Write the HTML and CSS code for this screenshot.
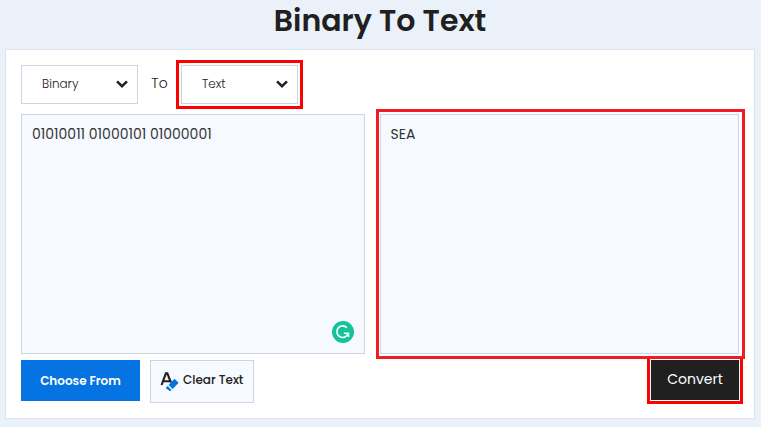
FILE: index.html
```html
<!DOCTYPE html>
<html lang="en">
<head>
<meta charset="utf-8">
<meta name="viewport" content="width=device-width, initial-scale=1">
<title>Binary To Text</title>
<link rel="stylesheet" href="styles.css">
</head>
<body>
<main class="page">
  <h1 class="title">Binary To Text</h1>
  <form class="card">
    <div class="units">
      <div class="select">
        <select aria-label="Convert from"><option>Binary</option></select>
        <svg class="chevron" viewBox="0 0 12 8" aria-hidden="true"><path d="M1 1.3 6 6.2 11 1.3"/></svg>
      </div>
      <span class="to">To</span>
      <div class="select select-marked">
        <select aria-label="Convert to"><option>Text</option></select>
        <svg class="chevron" viewBox="0 0 12 8" aria-hidden="true"><path d="M1 1.3 6 6.2 11 1.3"/></svg>
      </div>
    </div>
    <div class="panes">
      <div class="pane">
        <textarea aria-label="Input" spellcheck="false">01010011 01000101 01000001</textarea>
        <svg class="checker" viewBox="0 0 22 22" aria-hidden="true">
          <circle cx="11" cy="11" r="11" fill="#15c39a"/>
          <path d="M14.8 6.6A5.8 5.8 0 1 0 16.2 12.3H11.8M16.4 11.5V16" fill="none" stroke="#fff" stroke-width="1.6"/>
        </svg>
      </div>
      <div class="pane pane-marked">
        <textarea aria-label="Output" spellcheck="false" readonly>SEA</textarea>
      </div>
    </div>
    <div class="actions">
      <button class="choose" type="button">Choose From</button>
      <button class="clear" type="button">
        <svg class="eraser" viewBox="0 0 20 22" aria-hidden="true">
          <path d="M1.6 16 5.9 4.3H7.3L11 13.5M3.4 12.2H9.6" fill="none" stroke="#202124" stroke-width="2.1"/>
          <path d="M14 10.3Q14.7 9.8 15.3 10.4L18.1 13.3Q18.6 14 18 14.6L12.6 19.9 8.7 16Z" fill="#0573e1"/>
          <path d="M7.7 17 11.6 20.9 10.4 21.9Q9.8 22 9.3 21.7L6.3 19.4Q5.7 18.8 6.3 18.2Z" fill="#0573e1"/>
        </svg>
        <span>Clear Text</span>
      </button>
      <button class="convert" type="button">Convert</button>
    </div>
  </form>
</main>
</body>
</html>
```

FILE: styles.css
```css
* {
  box-sizing: border-box;
}

body {
  margin: 0;
  background: #eaf1f9;
  color: #202020;
  font-family: Poppins, Inter, "Open Sans", sans-serif;
}

.page {
  padding: 0 6px 8px 5px;
}

.title {
  margin: 0;
  padding-bottom: 8px;
  font-size: 30px;
  line-height: 41px;
  font-weight: 600;
  text-align: center;
}

.card {
  padding: 15px;
  background: #fff;
  border: 1px solid #dfe5f0;
}

.units {
  display: flex;
  align-items: center;
  margin-bottom: 10px;
}

.select {
  position: relative;
  width: 117px;
}

.select select {
  display: block;
  width: 100%;
  height: 39px;
  padding: 0 30px 2px 20px;
  appearance: none;
  background: #fff;
  border: 1px solid #cbd5e3;
  border-radius: 0;
  color: #202020;
  font: 300 12px Poppins, Inter, sans-serif;
}

.select-marked {
  outline: 3px solid #fe0000;
  outline-offset: 2px;
}

.chevron {
  position: absolute;
  top: 15px;
  right: 10px;
  width: 12px;
  height: 8px;
  fill: none;
  stroke: #202124;
  stroke-width: 2.4;
  pointer-events: none;
}

.to {
  width: 43px;
  padding-bottom: 2px;
  font-size: 14px;
  font-weight: 300;
  text-align: center;
}

.panes {
  display: flex;
  gap: 15px;
  margin-bottom: 6px;
}

.pane {
  position: relative;
  flex: 344 1 0;
}

.pane-marked {
  flex-grow: 360;
  z-index: 1;
}

.pane-marked::after {
  content: "";
  position: absolute;
  inset: -5px -6px -5px -4px;
  border: 3px solid #ee1c25;
  pointer-events: none;
}

.pane textarea {
  display: block;
  width: 100%;
  height: 240px;
  padding: 9px 10px;
  resize: none;
  background: #f6f9ff;
  border: 1px solid #cbd5e3;
  border-radius: 0;
  color: #333;
  font: 400 14px/21px Poppins, Inter, sans-serif;
}

.checker {
  position: absolute;
  right: 11px;
  bottom: 11px;
  width: 22px;
  height: 22px;
}

.actions {
  display: flex;
  align-items: flex-start;
}

.actions button {
  border: 0;
  border-radius: 0;
  font-family: inherit;
  white-space: nowrap;
}

.actions .choose {
  width: 119px;
  height: 41px;
  margin-right: 10px;
  background: #0573e1;
  color: #fff;
  font-size: 12px;
  font-weight: 600;
}

.actions .clear {
  display: flex;
  align-items: center;
  gap: 3px;
  width: 104px;
  height: 43px;
  padding: 0 0 3px 9px;
  background: #f6f9ff;
  border: 1px solid #cbd5e3;
  color: #202020;
  font-size: 12px;
  font-weight: 500;
}

.eraser {
  flex: none;
  width: 20px;
  height: 22px;
}

.actions .convert {
  width: 88px;
  height: 40px;
  padding-bottom: 3px;
  margin-left: auto;
  background: #202020;
  color: #fff;
  font-size: 14px;
  font-weight: 400;
  outline: 3px solid #fe0000;
  outline-offset: 1px;
}
```
